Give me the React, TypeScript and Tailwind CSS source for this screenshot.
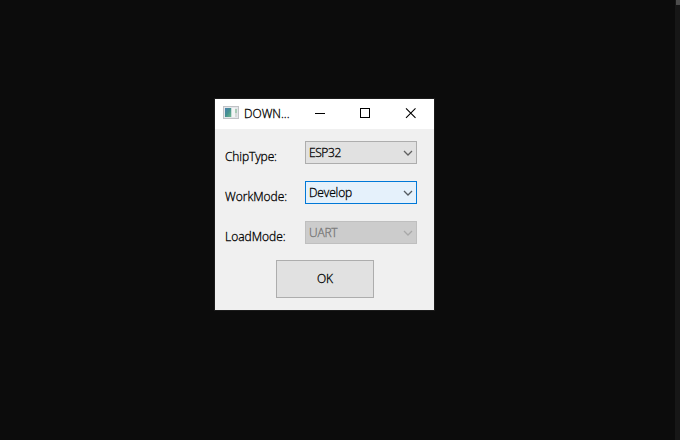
import React from 'react';

function Chevron({ color }: { color: string }) {
  return (
    <svg width="10" height="6" viewBox="0 0 10 6" fill="none" className="mr-[3px] shrink-0">
      <path d="M1 1L5 5L9 1" stroke={color} strokeWidth="1.3" />
    </svg>
  );
}

function Row({ label, labelClass, value, valueClass, boxClass, chevron }: {
  label: string; labelClass: string; value: string; valueClass: string; boxClass: string; chevron: string;
}) {
  return (
    <div className="flex h-[23px]">
      <span className={`w-20 shrink-0 pt-[8px] leading-4 ${labelClass}`}>{label}</span>
      <div className={`flex w-28 items-center justify-between border pl-[3px] ${boxClass}`}>
        <span className={`leading-4 ${valueClass}`}>{value}</span>
        <Chevron color={chevron} />
      </div>
    </div>
  );
}

function AppIcon() {
  return (
    <svg width="16" height="14" viewBox="0 0 16 14" className="shrink-0">
      <defs>
        <linearGradient id="screen" x1="0" y1="0" x2="1" y2="1">
          <stop offset="0" stopColor="#4a7fae" />
          <stop offset="0.5" stopColor="#459191" />
          <stop offset="1" stopColor="#6fb98c" />
        </linearGradient>
      </defs>
      <rect x="0.5" y="0.5" width="15" height="12" fill="#e4e6ea" stroke="#c0c2c5" />
      <rect x="2" y="2" width="6" height="9" fill="url(#screen)" />
      <rect x="9" y="2" width="3" height="9" fill="#f3f5f5" />
      <rect x="8" y="2" width="1" height="9" fill="#c8dcd9" />
      <rect x="12" y="3" width="2" height="4" fill="#a9cbb6" />
      <rect x="12" y="7" width="2" height="4" fill="#d6dad9" />
    </svg>
  );
}

export default function App() {
  return (
    <div className="flex h-[440px] w-[680px] overflow-hidden bg-[#0c0c0c] font-['Open_Sans','Noto_Sans',sans-serif] text-[12px] font-light text-black [-webkit-text-stroke:0.3px]">
      <div className="flex-1 pt-[98px] pl-[214px]">
        <div className="h-[213px] w-[221px] border border-[#1c1c1c] bg-[#f0f0f0]">
          <div className="flex h-[30px] bg-white pl-2">
            <div className="pt-[7px]"><AppIcon /></div>
            <span className="ml-[5px] w-[60px] pt-[7px] leading-4">DOWN...</span>
            <svg width="120" height="30" viewBox="0 0 120 30" fill="none" stroke="black" className="shrink-0">
              <path d="M11 14.5H21" />
              <rect x="56.5" y="9.5" width="9" height="9" />
              <path d="M102 9.3L111.5 18.8M111.5 9.3L102 18.8" strokeWidth="1.1" />
            </svg>
          </div>
          <div className="flex flex-col gap-[17px] pt-3 pl-[10px]">
            <Row label="ChipType:" labelClass="tracking-[-0.1px]" value="ESP32" valueClass="tracking-[-0.4px]" boxClass="border-[#adadad] bg-[#e1e1e1]" chevron="#606060" />
            <Row label="WorkMode:" labelClass="" value="Develop" valueClass="tracking-[-0.15px]" boxClass="border-[#0078d7] bg-[#e5f1fb]" chevron="#555b60" />
            <Row label="LoadMode:" labelClass="" value="UART" valueClass="tracking-[-0.2px] text-[#777777]" boxClass="border-[#bfbfbf] bg-[#cccccc]" chevron="#a8a8a8" />
          </div>
          <div className="flex justify-center pt-4">
            <button className="h-[38px] w-[98px] border border-[#adadad] bg-[#e1e1e1] pl-px leading-4">OK</button>
          </div>
        </div>
      </div>
      <div className="w-[5px] bg-[#171717] pl-px">
        <div className="h-[5px] bg-[#4d4d4d]" />
      </div>
    </div>
  );
}
